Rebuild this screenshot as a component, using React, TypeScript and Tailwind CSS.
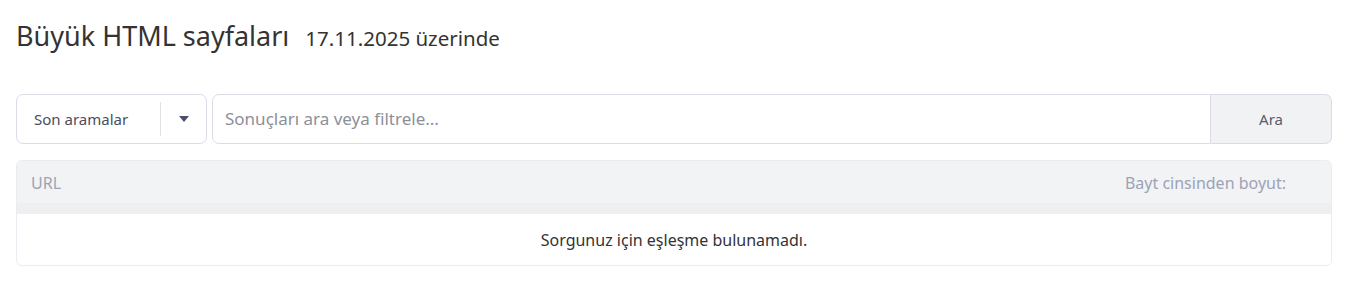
import { useState } from "react";

// ── Search bar ────────────────────────────────────────────────────────────────

function SearchBar() {
  const [query, setQuery] = useState("");

  return (
    <div className="flex items-stretch gap-[5px] h-[50px]">
      {/* Recent searches select */}
      <div className="flex items-center w-[191px] shrink-0 rounded-[7px] border border-[#dcdce8] bg-white">
        <span className="flex-1 pl-[17px] text-[15px] text-[#4a4d5e]">Son aramalar</span>
        <div className="w-px h-[34px] bg-[#e2e2e6]" />
        <div className="w-[45px] flex items-center justify-center">
          <svg width="10" height="6" viewBox="0 0 10 6">
            <path d="M0 0h10L5 6z" fill="#4b5068" />
          </svg>
        </div>
      </div>

      {/* Input + submit */}
      <div className="flex flex-1 items-stretch">
        <input
          value={query}
          onChange={(e) => setQuery(e.target.value)}
          placeholder="Sonuçları ara veya filtrele..."
          className="flex-1 min-w-0 rounded-l-[7px] border border-[#dcdce8] bg-white px-[12px] text-[17px] text-[#333] placeholder:text-[#8d8f99] outline-none"
        />
        <button className="w-[121px] shrink-0 rounded-r-[7px] border border-l-0 border-[#dcdce8] bg-[#f1f2f4] text-[15px] text-[#5a5d6c]">
          Ara
        </button>
      </div>
    </div>
  );
}

// ── Results table ─────────────────────────────────────────────────────────────

function ResultsTable() {
  return (
    <div className="mt-[16px] rounded-[6px] border border-[#ebebf2] overflow-hidden">
      <div className="flex items-start justify-between h-[42px] bg-[#f2f3f5] pl-[14px] pr-[45px] pt-[10px] text-[16px] text-[#9ea2b6]">
        <span>URL</span>
        <span>Bayt cinsinden boyut:</span>
      </div>
      <div className="h-[11px] bg-[#eeeff0]" />
      <div className="flex items-center justify-center h-[51px] bg-white text-[16px] text-[#333]">
        Sorgunuz için eşleşme bulunamadı.
      </div>
    </div>
  );
}

// ── Page ──────────────────────────────────────────────────────────────────────

export default function App() {
  return (
    <div
      className="min-h-screen bg-white pl-[16px] pr-[14px] pt-[16px]"
      style={{ fontFamily: '"Noto Sans", "Open Sans", sans-serif' }}
    >
      <h1 className="flex items-baseline gap-[16px] text-[#333] h-[62px]">
        <span className="text-[27px]">Büyük HTML sayfaları</span>
        <span className="text-[20.5px]">17.11.2025 üzerinde</span>
      </h1>

      <div className="mt-[16px]">
        <SearchBar />
        <ResultsTable />
      </div>
    </div>
  );
}
